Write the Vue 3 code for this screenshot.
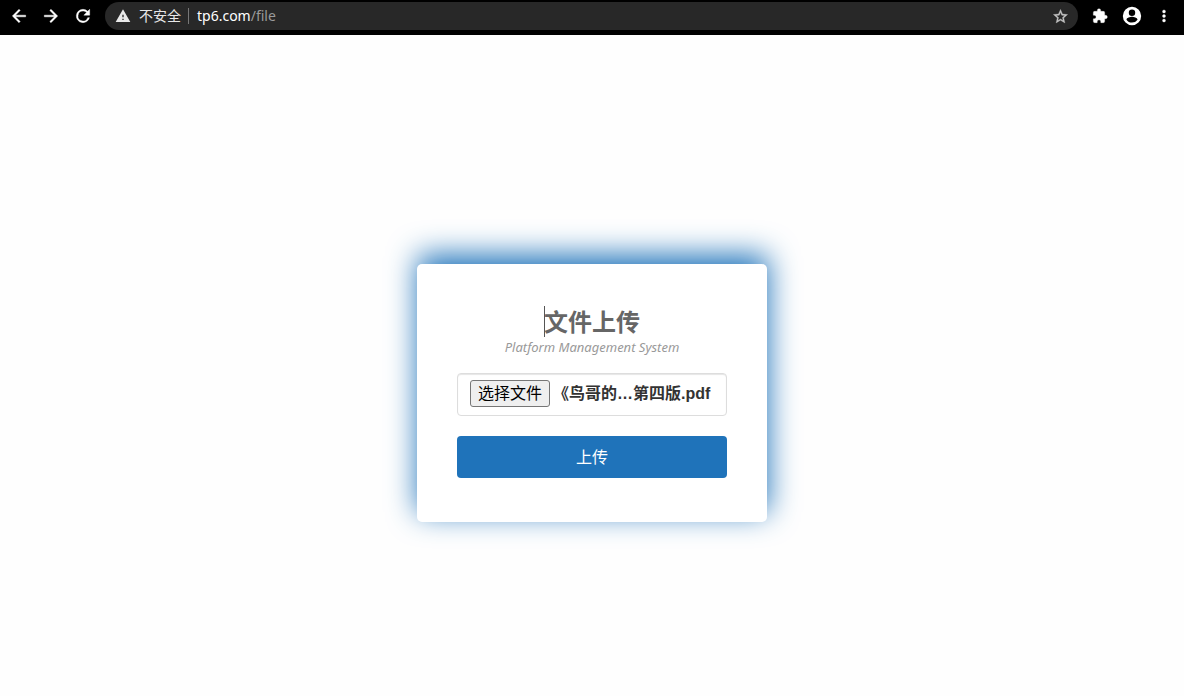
<script setup>
import { ref } from 'vue'

const address = { host: 'tp6.com', path: '/file' }
const fileName = ref('《鸟哥的…第四版.pdf')

function pickFile(event) {
  const file = event.target.files[0]
  if (file) fileName.value = file.name
}
</script>

<template>
  <div class="window">
    <header class="toolbar">
      <button class="tool" type="button" aria-label="后退">
        <svg viewBox="0 0 24 24"><path d="M20 11H7.83l5.59-5.59L12 4l-8 8 8 8 1.41-1.41L7.83 13H20z" /></svg>
      </button>
      <button class="tool" type="button" aria-label="前进">
        <svg viewBox="0 0 24 24"><path d="M12 4l-1.41 1.41L16.17 11H4v2h12.17l-5.58 5.59L12 20l8-8z" /></svg>
      </button>
      <button class="tool" type="button" aria-label="重新加载">
        <svg viewBox="0 0 24 24"><path d="M17.65 6.35A7.96 7.96 0 0 0 12 4a8 8 0 1 0 7.73 10h-2.08A6 6 0 1 1 12 6c1.66 0 3.14.69 4.22 1.78L13 11h7V4z" /></svg>
      </button>
      <div class="omnibox">
        <svg class="warning" viewBox="0 0 24 24"><path d="M1 21h22L12 2zm12-3h-2v-2h2zm0-4h-2v-4h2z" /></svg>
        <span class="insecure">不安全</span>
        <span class="url">{{ address.host }}<span class="path">{{ address.path }}</span></span>
        <button class="star" type="button" aria-label="收藏">
          <svg viewBox="0 0 24 24"><path d="M22 9.24l-7.19-.62L12 2 9.19 8.63 2 9.24l5.46 4.73L5.82 21 12 17.27 18.18 21l-1.63-7.03zM12 15.4l-3.76 2.27 1-4.28-3.32-2.88 4.38-.38L12 6.1l1.71 4.04 4.38.38-3.32 2.88 1 4.28z" /></svg>
        </button>
      </div>
      <button class="tool" type="button" aria-label="扩展程序">
        <svg class="puzzle" viewBox="0 0 24 24"><path d="M20.5 11H19V7a2 2 0 0 0-2-2h-4V3.500a2.500 2.500 0 0 0-5 0V5H4a2 2 0 0 0-2 2v3.800h1.500a2.700 2.700 0 0 1 0 5.400H2V20a2 2 0 0 0 2 2h3.800v-1.500a2.700 2.700 0 0 1 5.400 0V22H17a2 2 0 0 0 2-2v-4h1.500a2.500 2.500 0 0 0 0-5z" /></svg>
      </button>
      <button class="tool" type="button" aria-label="用户">
        <svg class="person" viewBox="0 0 24 24"><path d="M12 2a10 10 0 1 0 0 20 10 10 0 0 0 0-20zm0 3a3.500 3.500 0 1 1 0 7 3.500 3.500 0 0 1 0-7zm0 14.200a7.200 7.200 0 0 1-6-3.220c.03-1.990 4-3.080 6-3.080s5.970 1.090 6 3.080a7.200 7.200 0 0 1-6 3.220z" /></svg>
      </button>
      <button class="tool" type="button" aria-label="菜单">
        <svg viewBox="0 0 24 24"><path d="M12 8a2 2 0 1 0 0-4 2 2 0 0 0 0 4zm0 2a2 2 0 1 0 0 4 2 2 0 0 0 0-4zm0 6a2 2 0 1 0 0 4 2 2 0 0 0 0-4z" /></svg>
      </button>
    </header>

    <main class="page">
      <form class="card" @submit.prevent>
        <h1 class="title"><span class="caret">文件上传</span></h1>
        <p class="subtitle">Platform Management System</p>
        <label class="file-field">
          <input class="file-input" type="file" aria-label="选择文件" @change="pickFile" />
          <span class="file-button">选择文件</span>
          <span class="file-name">{{ fileName }}</span>
        </label>
        <button class="submit" type="submit">上传</button>
      </form>
    </main>
  </div>
</template>

<style>
body {
  margin: 0;
  background: #fefefe;
}
</style>

<style scoped>
.window {
  font-family: "Noto Sans", "Noto Sans CJK SC", sans-serif;
}

.toolbar {
  display: flex;
  align-items: center;
  box-sizing: border-box;
  height: 35px;
  padding: 0 4px 3px 3px;
  background: #000;
}

.tool,
.star {
  display: flex;
  align-items: center;
  justify-content: center;
  flex: none;
  width: 32px;
  height: 28px;
  padding: 0;
  border: 0;
  background: none;
}

.tool svg {
  width: 20px;
  height: 20px;
  fill: #fff;
  stroke: #fff;
  stroke-width: 0.5;
}

.tool .puzzle {
  width: 16px;
  height: 16px;
}

.tool .person {
  width: 22px;
  height: 22px;
  stroke: none;
}

.tool:last-child svg {
  width: 18px;
  height: 18px;
}

.omnibox {
  display: flex;
  align-items: center;
  flex: 1;
  height: 28px;
  margin: 0 6px;
  padding-left: 10px;
  border-radius: 14px;
  background: #282828;
  color: #fff;
  font-size: 14px;
  line-height: 20px;
}

.warning {
  width: 16px;
  height: 16px;
  margin-right: 8px;
  fill: #e8e8e8;
}

.insecure {
  color: #e8e8e8;
}

.url {
  flex: 1;
  position: relative;
  margin-left: 7px;
  padding-left: 9px;
}

.url::before {
  content: "";
  position: absolute;
  left: 0;
  top: 2px;
  bottom: 2px;
  width: 1px;
  background: #777;
}

.path {
  color: #9a9a9a;
}

.star {
  width: 36px;
}

.star svg {
  width: 17px;
  height: 17px;
  fill: #c4c4c4;
  stroke: #c4c4c4;
  stroke-width: 0.5;
}

.page {
  display: flex;
  justify-content: center;
  padding: 229px 16px 40px;
}

.card {
  box-sizing: border-box;
  width: 100%;
  max-width: 350px;
  padding: 40px 40px 44px;
  border-radius: 5px;
  background: #fff;
  box-shadow: 1px -9px 30px #1f73ba;
}

.title {
  margin: 0;
  color: #666;
  font-family: "Noto Sans CJK SC", sans-serif;
  font-size: 24px;
  font-weight: 700;
  line-height: 34px;
  text-align: center;
}

.caret {
  position: relative;
}

.caret::before {
  content: "";
  position: absolute;
  left: 0;
  top: 3px;
  height: 31px;
  width: 1px;
  background: #555;
}

.subtitle {
  margin: 0 0 17px;
  color: #999;
  font-size: 13px;
  font-style: italic;
  line-height: 18px;
  text-align: center;
}

.file-field {
  position: relative;
  display: flex;
  align-items: center;
  box-sizing: border-box;
  height: 43px;
  margin-bottom: 20px;
  padding: 0 12px 2px;
  border: 1px solid #ddd;
  border-radius: 4px;
  box-shadow: inset 0 1px 1px rgba(0, 0, 0, 0.1);
  font-size: 16px;
  line-height: 24px;
}

.file-input {
  position: absolute;
  inset: 0;
  width: 100%;
  opacity: 0;
}

.file-button {
  flex: none;
  box-sizing: border-box;
  height: 27px;
  padding: 0 7px;
  border: 1px solid #767676;
  border-radius: 3px;
  background: #efefef;
  color: #000;
}

.file-name {
  flex: 1;
  min-width: 0;
  margin-left: 3px;
  overflow: hidden;
  color: #333;
  font-family: "Liberation Sans", "Noto Sans CJK SC", sans-serif;
  font-weight: 700;
  line-height: 26px;
  white-space: nowrap;
}

.submit {
  display: block;
  width: 100%;
  height: 42px;
  padding: 0 0 2px;
  border: 0;
  border-radius: 4px;
  background: #1f73ba;
  color: #fff;
  font-family: "Noto Sans CJK SC", sans-serif;
  font-size: 16px;
  line-height: 24px;
}
</style>
